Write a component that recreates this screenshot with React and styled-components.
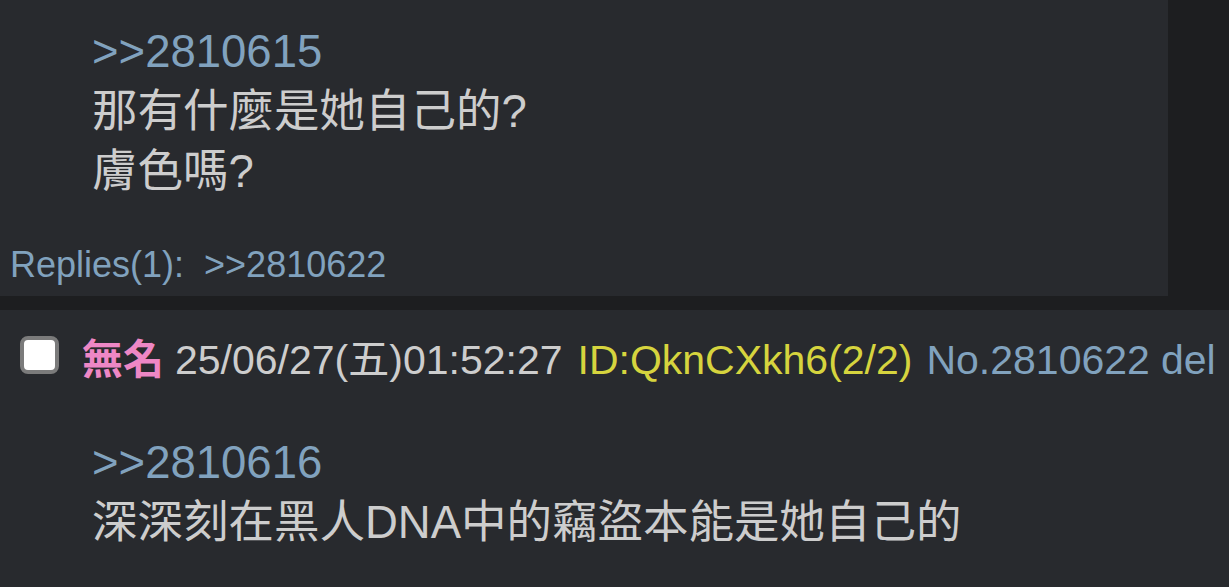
import React from "react";
import styled, { createGlobalStyle } from "styled-components";

const GlobalStyle = createGlobalStyle`
  html, body {
    margin: 0;
    padding: 0;
    background: #1d1e20;
    overflow: hidden;
  }
  body {
    font-family: "Liberation Sans", Arial, "Noto Sans CJK TC", sans-serif;
    color: #cdcdcd;
  }
`;

const Thread = styled.div`
  display: flex;
  flex-direction: column;
  align-items: flex-start;
  gap: 14px;
  height: 587px;
`;

const Post = styled.div`
  background: #282a2e;
  box-sizing: border-box;
  width: ${(p) => (p.$wide ? "100%" : "1168px")};
  flex: ${(p) => (p.$wide ? "1" : "none")};
  padding: ${(p) => p.$pad};
`;

const Header = styled.div`
  display: flex;
  align-items: center;
  height: 50px;
  padding-left: 20px;
  font-size: 41px;
  line-height: 50px;
  white-space: nowrap;
`;

const Check = styled.span`
  width: 39px;
  height: 38px;
  box-sizing: border-box;
  border: 4px solid #7b7b7b;
  border-radius: 8px;
  background: #ffffff;
  margin: -10px 23px 0 0;
  flex: none;
`;

const Name = styled.span`
  color: #ee87c5;
  font-weight: bold;
  margin-right: 11px;
`;

const Date = styled.span`
  color: #cdcdcd;
  margin-right: 15px;
`;

const Uid = styled.span`
  color: #d6d43e;
  margin-right: 14px;
`;

const Link = styled.span`
  color: #81a2be;
  margin-right: ${(p) => p.$gap || 0}px;
`;

const Body = styled.div`
  padding-left: 92px;
  font-size: 45.5px;
  line-height: 60px;
  color: #cdcdcd;
  margin-top: ${(p) => p.$top || 0}px;
`;

const Quote = styled.div`
  color: #81a2be;
`;

const Replies = styled.div`
  margin-top: 41px;
  padding-left: 10px;
  font-size: 36px;
  line-height: 44px;
  color: #81a2be;
  white-space: pre;
`;

export default function App() {
  return (
    <>
      <GlobalStyle />
      <Thread>
        <Post $pad="22px 0 9px 0">
          <Body>
            <Quote>&gt;&gt;2810615</Quote>
            <div>那有什麼是她自己的?</div>
            <div>膚色嗎?</div>
          </Body>
          <Replies>{"Replies(1):  >>2810622"}</Replies>
        </Post>
        <Post $wide $pad="25px 0 0 0">
          <Header>
            <Check />
            <Name>無名</Name>
            <Date>25/06/27(五)01:52:27</Date>
            <Uid>ID:QknCXkh6(2/2)</Uid>
            <Link $gap={11}>No.2810622</Link>
            <Link>del</Link>
          </Header>
          <Body $top={48}>
            <Quote>&gt;&gt;2810616</Quote>
            <div>深深刻在黑人DNA中的竊盜本能是她自己的</div>
          </Body>
        </Post>
      </Thread>
    </>
  );
}
